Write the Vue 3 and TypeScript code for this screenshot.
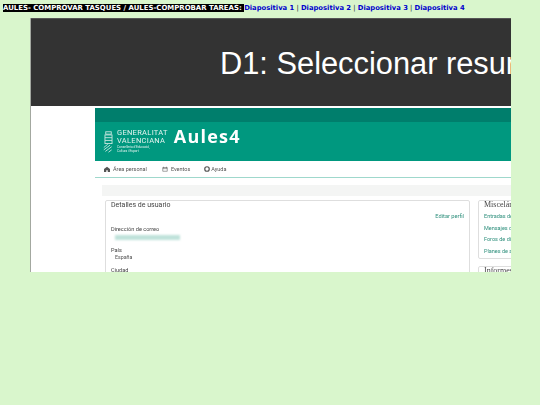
<script setup lang="ts">
const slides: string[] = ['Diapositiva 1', 'Diapositiva 2', 'Diapositiva 3', 'Diapositiva 4']
const nav = [
  { label: 'Área personal', kind: 'home' },
  { label: 'Eventos', kind: 'cal' },
  { label: 'Ayuda', kind: 'help' },
]
const misc: string[] = ['Entradas de blog', 'Mensajes del foro', 'Foros de discusión', 'Planes de aprendizaje']
</script>

<template>
  <div class="page">
    <div class="topline">
      <span class="heading">AULES- COMPROVAR TASQUES / AULES-COMPROBAR TAREAS:&nbsp;</span>
      <span class="links">
        <template v-for="(s, i) in slides" :key="s">
          <span v-if="i" class="sep"> | </span><a class="link">{{ s }}</a>
        </template>
      </span>
    </div>

    <div class="slide">
      <div class="title-bar">
        <h1 class="title">D1: Seleccionar resumen</h1>
      </div>
      <div class="shot-wrap">
        <div class="shot">
          <div class="band"></div>
          <div class="brand">
            <svg class="crest" viewBox="0 0 14 28">
              <g fill="none" stroke="#cfe9e3" stroke-width="1.1">
                <rect x="3.5" y="1" width="7" height="3" />
                <rect x="2.5" y="5" width="9" height="11" />
                <path d="M2.5 8.5h9M2.5 12h9" />
                <path d="M1 21l5-4M1 24l8-6M3 26l8-6M7 27l4-3" />
              </g>
            </svg>
            <div class="gva">
              <div class="gva-name">GENERALITAT<br />VALENCIANA</div>
              <div class="gva-sub">Conselleria d'Educació,<br />Cultura i Esport</div>
            </div>
            <div class="aules">Aules4</div>
          </div>
          <div class="nav">
            <span v-for="n in nav" :key="n.label" class="nav-item">
              <svg class="nav-icon" viewBox="0 0 8 8">
                <path v-if="n.kind === 'home'" d="M0 4l4-3 4 3v4H5V5.500H3V8H0z" fill="#555" />
                <path v-else-if="n.kind === 'cal'" d="M1 2h6v5H1zM2 1v2M6 1v2M1 3.500h6" fill="none" stroke="#666" stroke-width=".8" />
                <g v-else fill="none" stroke="#555" stroke-width="1.600"><circle cx="4" cy="4" r="3" /></g>
              </svg>
              {{ n.label }}
            </span>
          </div>
          <div class="content">
            <div class="crumb"></div>
            <div class="columns">
              <section class="card main-card">
                <h2 class="card-title">Detalles de usuario</h2>
                <div class="edit">Editar perfil</div>
                <div class="field-label first">Dirección de correo</div>
                <div class="email"></div>
                <div class="field-label">País</div>
                <div class="field-value">España</div>
                <div class="field-label city">Ciudad</div>
              </section>
              <aside class="side">
                <section class="card side-card">
                  <h2 class="side-title">Misceláneas</h2>
                  <div v-for="m in misc" :key="m" class="side-link">{{ m }}</div>
                </section>
                <section class="card side-card">
                  <h2 class="side-title">Informes</h2>
                </section>
              </aside>
            </div>
          </div>
        </div>
      </div>
    </div>
  </div>
</template>

<style>
html, body {
  margin: 0;
  background: #d9f6cc;
}
</style>

<style scoped>
.page {
  width: 540px;
  height: 405px;
  overflow: hidden;
  background: #d9f6cc;
  font-family: "DejaVu Sans", sans-serif;
}
.topline {
  display: flex;
  align-items: center;
  height: 8px;
  padding: 4px 0 0 3px;
  font-weight: 700;
  line-height: 8px;
  white-space: nowrap;
}
.heading {
  background: #000;
  color: #fff;
  font-size: 6.950px;
}
.links {
  white-space: pre;
  font-size: 6.800px;
}
.link {
  color: #0000cc;
}
.sep {
  color: #223;
  font-weight: 400;
}
.slide {
  width: 481px;
  height: 254px;
  margin: 6px 0 0 30px;
  overflow: hidden;
  background: #fff;
  box-sizing: border-box;
  border-left: 1px solid #a3a8a0;
}
.title-bar {
  height: 88px;
  background: #333;
  border-top: 1px solid #555;
  box-sizing: border-box;
  display: flex;
  align-items: center;
  padding: 3px 0 0 189px;
}
.title {
  margin: 0;
  color: #fff;
  font: 400 30.800px "Liberation Sans", sans-serif;
  white-space: nowrap;
}
.shot-wrap {
  padding: 2px 0 0 64px;
  filter: blur(0.35px);
}
.shot {
  width: 500px;
  font-family: Roboto, sans-serif;
}
.band {
  height: 14px;
  background: #007e6c;
}
.brand {
  height: 39px;
  background: #00987f;
  display: flex;
  align-items: center;
  padding-left: 8px;
  color: #e4f4f0;
}
.crest {
  width: 11px;
  height: 28px;
}
.gva {
  margin-left: 3px;
}
.gva-name {
  font-size: 7.500px;
  line-height: 8px;
  letter-spacing: 0.3px;
}
.gva-sub {
  font-size: 3.200px;
  line-height: 3.800px;
  margin-top: 1px;
}
.aules {
  margin-left: 6px;
  margin-top: -11px;
  font: 700 18px "Open Sans", sans-serif;
  letter-spacing: 1.200px;
  color: #fff;
}
.nav {
  height: 15px;
  border-bottom: 1px solid #9fd8cc;
  display: flex;
  align-items: center;
  gap: 15px;
  padding: 0 0 1px 9px;
  box-sizing: content-box;
  font-size: 5.500px;
  color: #555;
}
.nav-item {
  display: flex;
  align-items: center;
  gap: 3px;
}
.nav-item:last-child {
  margin-left: -1px;
  gap: 1px;
}
.nav-icon {
  width: 6px;
  height: 6px;
}
.content {
  padding: 7px 0 0 7px;
}
.crumb {
  height: 11px;
  background: #f4f5f4;
}
.columns {
  display: flex;
  gap: 8px;
  margin: 4px 0 0 3px;
}
.card {
  border: 1px solid #dedede;
  border-radius: 2px;
  box-sizing: border-box;
  background: #fff;
}
.main-card {
  flex: none;
  width: 365px;
  height: 90px;
  padding: 0 5px;
  position: relative;
}
.card-title {
  margin: 0;
  font-size: 7px;
  font-weight: 400;
  line-height: 8px;
  color: #444;
}
.edit {
  margin-top: 3px;
  text-align: right;
  font-size: 5.700px;
  line-height: 8px;
  color: #2e8f7c;
}
.field-label {
  font-size: 5.600px;
  line-height: 7px;
  color: #444;
}
.field-label.first {
  margin-top: 6px;
}
.email {
  width: 65px;
  height: 5px;
  margin: 2px 0 7px 4px;
  background: #bfe2da;
  filter: blur(0.8px);
}
.field-value {
  padding-left: 4px;
  font-size: 5.300px;
  line-height: 7px;
  color: #555;
}
.field-label.city {
  margin-top: 6px;
}
.side {
  flex: none;
  display: flex;
  flex-direction: column;
  gap: 7px;
  width: 120px;
}
.side-card {
  padding: 0 5px;
  min-height: 20px;
}
.side-card:first-child {
  padding-bottom: 1px;
}
.side-title {
  margin: 0 0 2px;
  font: 400 8px/8px "Liberation Serif", serif;
  color: #444;
}
.side-link {
  font-size: 5.500px;
  line-height: 11.500px;
  color: #2e8f7c;
  white-space: nowrap;
}
</style>
